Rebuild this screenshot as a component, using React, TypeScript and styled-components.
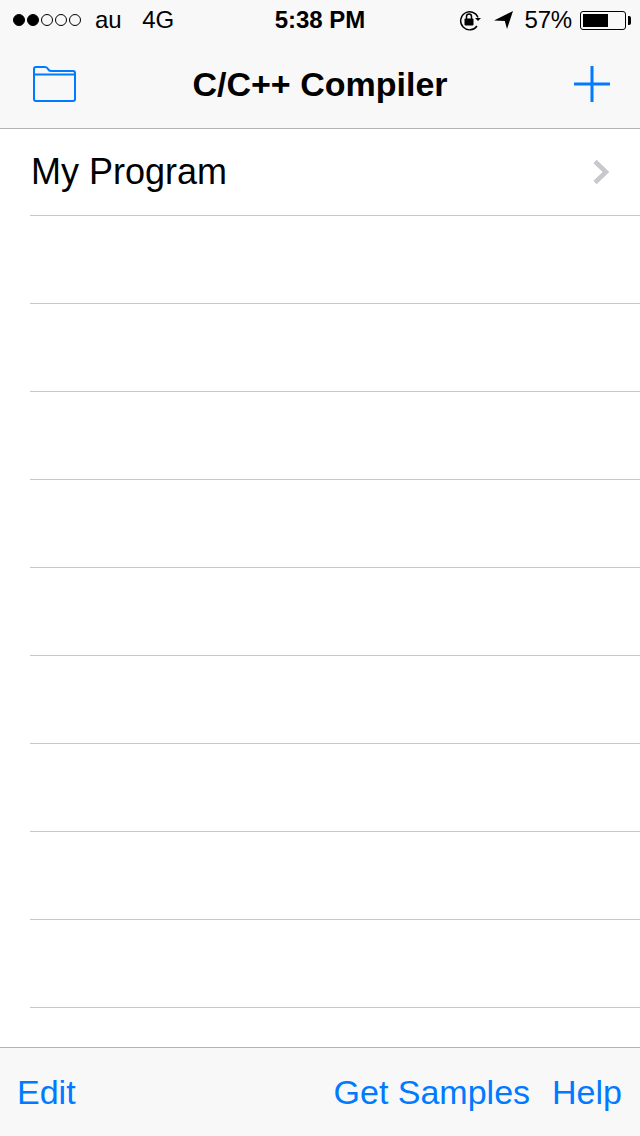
import styled, { createGlobalStyle } from 'styled-components';

const GlobalStyle = createGlobalStyle`
  html, body {
    margin: 0;
    padding: 0;
    background: #fff;
    font-family: "Liberation Sans", Arial, sans-serif;
  }
`;

const Screen = styled.div`
  width: 640px;
  height: 1136px;
  display: flex;
  flex-direction: column;
  overflow: hidden;
  background: #fff;
  color: #000;
`;

const Header = styled.header`
  height: 128px;
  flex: none;
  background: #f8f8f8;
  border-bottom: 1px solid #b2b2b2;
  display: flex;
  flex-direction: column;
`;

const StatusBar = styled.div`
  height: 40px;
  flex: none;
  padding: 0 14px 0 13px;
  display: flex;
  align-items: center;
  justify-content: space-between;
  position: relative;
  font-size: 24px;
`;

const StatusGroup = styled.div`
  display: flex;
  align-items: center;
`;

const Dots = styled.div`
  display: flex;
  gap: 2px;
  margin-right: 14px;
`;

const Dot = styled.span<{ $on?: boolean }>`
  width: 12px;
  height: 12px;
  box-sizing: border-box;
  border-radius: 50%;
  border: 1px solid #000;
  background: ${(p) => (p.$on ? '#000' : 'transparent')};
`;

const Carrier = styled.span<{ $gap?: number }>`
  margin-right: ${(p) => p.$gap ?? 0}px;
  letter-spacing: -0.2px;
`;

const Clock = styled.span`
  position: absolute;
  left: 0;
  right: 0;
  text-align: center;
  font-weight: bold;
  pointer-events: none;
`;

const Battery = styled.div`
  width: 46px;
  height: 19px;
  box-sizing: border-box;
  border: 1px solid #000;
  border-radius: 3px;
  padding: 2px;
  margin-left: 8px;
  position: relative;
  &::after {
    content: '';
    position: absolute;
    right: -6px;
    top: 4px;
    width: 3px;
    height: 9px;
    background: #000;
    border-radius: 0 2px 2px 0;
  }
`;

const BatteryFill = styled.div`
  height: 100%;
  background: #000;
`;

const NavBar = styled.div`
  flex: 1;
  padding: 0 32px;
  display: flex;
  align-items: center;
  justify-content: space-between;
  position: relative;
`;

const Title = styled.h1`
  position: absolute;
  left: 0;
  right: 0;
  margin: 0;
  text-align: center;
  font-size: 34px;
  font-weight: bold;
`;

const List = styled.main`
  flex: 1;
  min-height: 0;
  overflow: hidden;
`;

const Row = styled.div<{ $first?: boolean }>`
  height: ${(p) => (p.$first ? 87 : 88)}px;
  box-sizing: border-box;
  margin-left: 30px;
  padding: 0 30px 0 1px;
  border-bottom: 1px solid #c8c7cc;
  display: flex;
  align-items: center;
  justify-content: space-between;
  font-size: 36px;
`;

const Toolbar = styled.footer`
  height: 89px;
  flex: none;
  box-sizing: border-box;
  background: #f8f8f8;
  border-top: 1px solid #b2b2b2;
  padding: 0 18px 0 17px;
  display: flex;
  align-items: center;
  font-size: 34px;
  color: #007aff;
`;

const ToolButton = styled.span<{ $push?: boolean }>`
  margin-left: ${(p) => (p.$push ? 'auto' : '22px')};
`;

const FirstButton = styled.span``;

const rowCount = 10;

export default function App() {
  return (
    <Screen>
      <GlobalStyle />
      <Header>
        <StatusBar>
          <StatusGroup>
            <Dots>
              <Dot $on />
              <Dot $on />
              <Dot />
              <Dot />
              <Dot />
            </Dots>
            <Carrier $gap={21}>au</Carrier>
            <Carrier>4G</Carrier>
          </StatusGroup>
          <Clock>5:38 PM</Clock>
          <StatusGroup>
            <svg width="24" height="24" viewBox="0 0 24 24" fill="none">
              <path d="M20 9.5A9 9 0 1 0 19 18" stroke="#000" strokeWidth="1.4" />
              <path d="M17 10h6l-3 3z" fill="#000" />
              <rect x="6.5" y="10.5" width="9" height="7" rx="1" fill="#000" />
              <path d="M8.5 11V8.5a2.5 2.5 0 0 1 5 0V11" stroke="#000" strokeWidth="1.5" />
            </svg>
            <svg width="22" height="20" viewBox="0 0 22 20" style={{ marginLeft: 11 }}>
              <path d="M1 10.5 20 1l-6 18-2.2-8z" fill="#000" />
            </svg>
            <Carrier style={{ marginLeft: 10 }}>57%</Carrier>
            <Battery>
              <BatteryFill style={{ width: `${57 * 1.08}%` }} />
            </Battery>
          </StatusGroup>
        </StatusBar>
        <NavBar>
          <svg width="44" height="38" viewBox="0 0 44 38" fill="none">
            <path
              d="M2 9V4a2 2 0 0 1 2-2h9c2 0 2.500 1 3 2s1 2 3 2h22a2 2 0 0 1 2 2v26a2 2 0 0 1-2 2H4a2 2 0 0 1-2-2z M2 9.500h40"
              stroke="#007aff"
              strokeWidth="2"
            />
          </svg>
          <Title>C/C++ Compiler</Title>
          <svg width="36" height="36" viewBox="0 0 36 36" style={{ marginRight: -2 }}>
            <path d="M18 0v36M0 18h36" stroke="#007aff" strokeWidth="3" />
          </svg>
        </NavBar>
      </Header>
      <List>
        {Array.from({ length: rowCount }, (_, i) => (
          <Row key={i} $first={i === 0}>
            {i === 0 && (
              <>
                <span>My Program</span>
                <svg width="18" height="26" viewBox="0 0 18 26" fill="none">
                  <path d="M3 2.500 14 13 3 23.500" stroke="#c7c7cc" strokeWidth="4.500" />
                </svg>
              </>
            )}
          </Row>
        ))}
      </List>
      <Toolbar>
        <FirstButton>Edit</FirstButton>
        <ToolButton $push>Get Samples</ToolButton>
        <ToolButton>Help</ToolButton>
      </Toolbar>
    </Screen>
  );
}
